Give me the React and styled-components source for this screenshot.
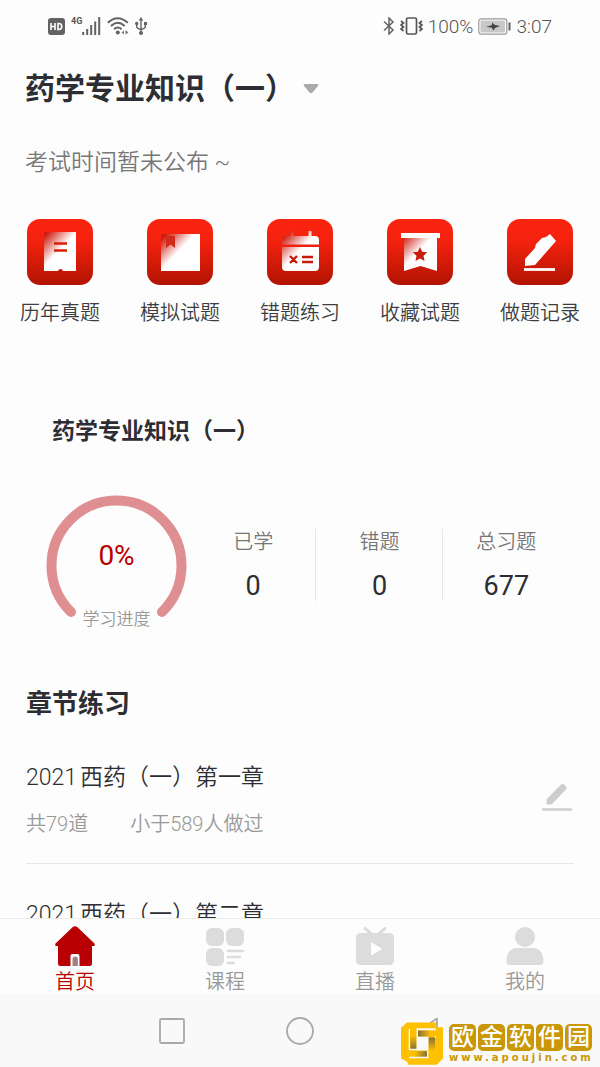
import React from 'react';
import styled, { createGlobalStyle } from 'styled-components';

const GlobalStyle = createGlobalStyle`
  * {
    box-sizing: border-box;
  }
  body {
    margin: 0;
    background: #fdfdfd;
    color: #2d2e33;
    font-family: Roboto, 'Noto Sans CJK SC', sans-serif;
  }
  h1, h2, h3, p, ul, dl, dd {
    margin: 0;
    padding: 0;
  }
  button, select {
    margin: 0;
    padding: 0;
    border: 0;
    background: none;
    color: inherit;
    font: inherit;
  }
`;
const Page = styled.div`
  display: flex;
  flex-direction: column;
  height: 100vh;
`;
const StatusBar = styled.header`
  display: flex;
  flex: none;
  align-items: center;
  justify-content: space-between;
  height: 52px;
  padding: 0 48px;
  color: #555;
  font-size: 19px;
  font-weight: 350;
`;
const StatusGroup = styled.div`
  display: flex;
  align-items: center;
  gap: ${(props) => props.$gap}px;
`;
const Signal = styled.div`
  display: flex;
  align-items: flex-start;
  font-size: 9px;
  font-weight: 700;
  line-height: 9px;
`;
const Content = styled.main`
  flex: 1;
  min-height: 0;
  overflow: hidden;
`;
const Heading = styled.div`
  padding: 17px 25px 0;
`;
const SubjectPicker = styled.label`
  display: inline-flex;
  align-items: center;
  gap: 8px;
`;
const SubjectSelect = styled.select`
  appearance: none;
  field-sizing: content;
  height: 40px;
  font-size: 30px;
  font-weight: 700;
  line-height: 40px;
`;
const Notice = styled.p`
  margin-top: 38px;
  color: #777;
  font-size: 23px;
  font-weight: 350;
  line-height: 32px;
`;
const Shortcuts = styled.nav`
  display: grid;
  grid-template-columns: repeat(5, 1fr);
  margin-top: 40px;
`;
const Shortcut = styled.button`
  display: flex;
  flex-direction: column;
  align-items: center;
  gap: 14px;
  color: #3c3d42;
  font-size: 20px;
  font-weight: 350;
  line-height: 28px;
`;
const Card = styled.section`
  padding: 89px 31px 0 46px;
`;
const CardTitle = styled.h2`
  padding-left: 6px;
  font-size: 23px;
  font-weight: 700;
  line-height: 32px;
`;
const CardBody = styled.div`
  display: flex;
  margin-top: 47px;
`;
const Gauge = styled.div`
  position: relative;
  flex: none;
  width: 141px;
  height: 136px;
`;
const GaugeText = styled.div`
  position: absolute;
  inset: 44px 0 0;
  display: flex;
  flex-direction: column;
  align-items: center;
  justify-content: space-between;
  color: #999;
  font-size: 17px;
  font-weight: 350;
  line-height: 24px;
`;
const Percent = styled.strong`
  color: #b80000;
  font-size: 28px;
  font-weight: 400;
  line-height: 34px;
`;
const Stats = styled.dl`
  display: grid;
  flex: 1;
  grid-template-columns: repeat(3, 1fr);
  align-self: flex-start;
  margin: 34px 0 0 3px;
`;
const Stat = styled.div`
  height: 72px;
  padding-left: 1px;
  border-right: 1px solid #e6e6e6;
  text-align: center;
  &:last-child {
    border-right: 0;
  }
`;
const StatLabel = styled.dt`
  color: #777;
  font-size: 20px;
  font-weight: 350;
  line-height: 26px;
`;
const StatValue = styled.dd`
  margin-top: 14px;
  font-size: 27px;
  line-height: 34px;
`;
const Chapters = styled.section`
  padding: 55px 26px 0;
`;
const ChaptersTitle = styled.h2`
  font-size: 26px;
  font-weight: 700;
  line-height: 36px;
`;
const ChapterList = styled.ul`
  margin-top: 5px;
  list-style: none;
`;
const Chapter = styled.li`
  display: flex;
  align-items: center;
  justify-content: space-between;
  padding: 36px 2px 25px 0;
  border-bottom: 1px solid #e6e6e6;
`;
const ChapterTitle = styled.h3`
  font-size: 23px;
  font-weight: 350;
  line-height: 30px;
  text-autospace: normal;
`;
const Meta = styled.p`
  display: flex;
  gap: 42px;
  margin-top: 17px;
  color: #999;
  font-size: 20px;
  font-weight: 350;
  line-height: 28px;
`;
const EditButton = styled.button`
  display: flex;
  padding-bottom: 8px;
`;
const TabBar = styled.nav`
  display: grid;
  flex: none;
  grid-template-columns: repeat(4, 1fr);
  height: 76px;
  border-top: 1px solid #ececec;
`;
const Tab = styled.a`
  display: flex;
  flex-direction: column;
  align-items: center;
  gap: 4px;
  padding-top: 7px;
  color: ${(props) => (props.$active ? '#b80000' : '#999')};
  font-size: 20px;
  font-weight: 350;
  line-height: 24px;
  text-decoration: none;
`;
const SystemNav = styled.footer`
  position: relative;
  display: flex;
  flex: none;
  justify-content: center;
  height: 73px;
  background: #f9f9f9;
`;
const SystemButton = styled.button`
  display: flex;
  align-items: center;
  justify-content: center;
  width: 128px;
`;
const Watermark = styled.div`
  position: absolute;
  right: 8px;
  bottom: 2px;
  display: flex;
  align-items: flex-end;
  gap: 6px;
`;
const Brand = styled.div`
  display: flex;
  flex-direction: column;
  width: 143px;
  color: #c99708;
`;
const Tiles = styled.div`
  display: flex;
  gap: 2px;
`;
const Tile = styled.span`
  width: 27px;
  height: 27px;
  border-radius: 5px;
  background: #c99708;
  color: #fff;
  font-size: 23px;
  font-weight: 500;
  line-height: 27px;
  text-align: center;
`;
const Site = styled.span`
  font-family: 'DejaVu Sans', sans-serif;
  font-size: 10px;
  font-weight: 700;
  letter-spacing: 3px;
  line-height: 14px;
  white-space: nowrap;
`;

const HdIcon = () => (
  <svg width="17" height="17" viewBox="0 0 17 17">
    <rect width="17" height="17" rx="3" fill="#626262" />
    <path d="M3 5v7M7 5v7M3 8.500h4M10 5.500v6h1q2.700 0 2.700-3t-2.700-3z" fill="none" stroke="#fff" strokeWidth="1.600" />
  </svg>
);
const BarsIcon = () => (
  <svg width="19" height="18" viewBox="0 0 19 18">
    <path d="M1.200 18v-3M5.200 18v-6M9.200 18V8M13.200 18V4.500M17.200 18V0" stroke="#626262" strokeWidth="2" />
  </svg>
);
const WifiIcon = () => (
  <svg width="22" height="18" viewBox="0 0 22 18">
    <g fill="none" stroke="#626262" strokeWidth="1.900">
      <path d="M.8 5.800q9.700-9.200 20 0" />
      <path d="M3.900 9q6.800-6.400 13.800 0" />
      <path d="M7 12.200q3.800-3.500 7.600 0" />
    </g>
    <circle cx="10.800" cy="15.500" r="2" fill="#626262" />
    <path d="M17 13.500v4l-2.500-2zM18.500 13l3 2.500-3 2z" fill="#777" />
  </svg>
);
const UsbIcon = () => (
  <svg width="12" height="18" viewBox="0 0 12 18">
    <path d="M6 2v14M1.700 7v2.500q0 2 4.300 3M10.300 7v2.500q0 2-4.300 3" fill="none" stroke="#626262" strokeWidth="1.400" />
    <path d="M6 0l2.300 3.500H3.700zM9 5h3v3H9z" fill="#626262" />
    <circle cx="1.700" cy="6.500" r="1.700" fill="#626262" />
    <circle cx="6" cy="16" r="2" fill="#626262" />
  </svg>
);
const BluetoothIcon = () => (
  <svg width="12" height="18" viewBox="0 0 12 18">
    <path d="M1 4.500l9 8.500-4 4V1l4 4-9 8.500" fill="none" stroke="#626262" strokeWidth="1.500" />
  </svg>
);
const VibrateIcon = () => (
  <svg width="23" height="18" viewBox="0 0 23 18">
    <rect x="6.500" y="1" width="10" height="16" rx="1.500" fill="none" stroke="#555" strokeWidth="1.700" />
    <path d="M1 4l2.500 2L1 8l2.500 2L1 12l2.500 2M22 4l-2.500 2L22 8l-2.500 2 2.500 2-2.500 2" fill="none" stroke="#555" strokeWidth="1.700" />
  </svg>
);
const BatteryIcon = () => (
  <svg width="33" height="17" viewBox="0 0 33 17">
    <rect x=".8" y=".8" width="28" height="15.400" rx="2.500" fill="#fff" stroke="#999" strokeWidth="1.200" />
    <rect x="2.500" y="2.500" width="24.600" height="12" rx="1" fill="#c8c8c8" />
    <rect x="30.500" y="4.500" width="2" height="8" fill="#626262" />
    <path d="M8 9l6-2V4.500l3 2.500 5 1-5 2-1.500 2.500-2-3z" fill="#444" />
  </svg>
);

const ShortcutGlyph = ({ name }) => {
  const fade = 'url(#fade)';
  switch (name) {
    case 'paper':
      return (
        <>
          <path d="M17 13h32v39H36a2.600 2.600 0 0 0-5 0H17z" fill={fade} />
          <path d="M27 24.500h13M27 31.500h13" stroke="#d81d08" strokeWidth="2.500" />
        </>
      );
    case 'book':
      return (
        <>
          <path d="M14 15h39v37H14z" fill={fade} />
          <path d="M19 17h9v12l-4.500-3.500L19 29z" fill="#d42a1c" />
        </>
      );
    case 'calendar':
      return (
        <>
          <path d="M25 12v7M43 12v7" stroke={fade} strokeWidth="3" />
          <path d="M15 25.500V21q0-4 4-4h29q4 0 4 4v4.500zM15 28h37v20q0 4-4 4H19q-4 0-4-4z" fill={fade} />
          <path d="M23 37l7 7M30 37l-7 7M35 38h11M35 43h11" stroke="#c71a08" strokeWidth="2.400" />
        </>
      );
    case 'banner':
      return (
        <>
          <path d="M17 18h33v34l-16.500-5L17 52z" fill={fade} />
          <path d="M14 14h39v5H14z" fill="#fff" />
          <path d="M33 28l2.200 4.700 5.100.600-3.800 3.500 1 5.100-4.500-2.500-4.500 2.500 1-5.100-3.800-3.500 5.100-.600z" fill="#c91c0b" />
        </>
      );
    default:
      return (
        <>
          <path d="M18 40L28 29L29 25L35 19L39 18L43 15L49 22L28 46L18 47z" fill="#fff" />
          <path d="M17 50.500h31" stroke="#fff" strokeWidth="2.800" />
        </>
      );
  }
};
const ShortcutIcon = ({ name }) => (
  <svg width="66" height="66" viewBox="0 0 66 66">
    <defs>
      <linearGradient id="tile" x1="0" y1="0" x2="0" y2="1">
        <stop offset="0" stopColor="#fb2410" />
        <stop offset="0.350" stopColor="#f3220e" />
        <stop offset="1" stopColor="#b01402" />
      </linearGradient>
      <linearGradient id="fade" gradientUnits="userSpaceOnUse" x1="16" y1="15" x2="33" y2="31">
        <stop offset="0.100" stopColor="#cf1c10" />
        <stop offset="1" stopColor="#fff" />
      </linearGradient>
    </defs>
    <rect width="66" height="66" rx="13" fill="url(#tile)" />
    <ShortcutGlyph name={name} />
  </svg>
);

const TabIcon = ({ name }) => (
  <svg width="40" height="40" viewBox="0 0 40 40" fill="#dcdcdc">
    {name === 'home' && (
      <>
        <path d="M17.500 1.300q2.500-2 5 0L39.500 17.500q1 2.500-1 2.500H37v17.500q0 2.500-2.500 2.500h-29Q3 40 3 37.500V20H1.500q-2 0-1-2.500z" fill="#b80004" />
        <path d="M15.500 40V30q0-2 2-2h5q2 0 2 2v10z" fill="#fff" />
        <path d="M17.500 40v-6.500q0-3 2.700-3t2.700 3V40z" fill="#a58080" />
      </>
    )}
    {name === 'course' && (
      <>
        <rect x="1" y="2" width="18" height="18" rx="6" />
        <rect x="21" y="2" width="18" height="18" rx="6" />
        <rect x="1" y="22" width="18" height="18" rx="6" />
        <path d="M23 25h15M23 31h12M23 37h6" stroke="#dcdcdc" strokeWidth="2.500" strokeLinecap="round" />
      </>
    )}
    {name === 'live' && (
      <>
        <path d="M10 2.500l7 6M30 2.500l-7 6" stroke="#dcdcdc" strokeWidth="3" strokeLinecap="round" />
        <rect x="1" y="7" width="38" height="32" rx="4.500" />
        <path d="M16 17.500v10.500q0 1.500 1.500.700l8.500-5q1.200-.900 0-1.800l-8.500-5q-1.500-.800-1.500.600z" fill="#fff" />
      </>
    )}
    {name === 'me' && (
      <>
        <circle cx="20" cy="11" r="10" />
        <path d="M13 22h14q11 0 11.500 13 0 4-3 4h-31q-3 0-3-4Q2 22 13 22z" />
      </>
    )}
  </svg>
);

const EditIcon = () => (
  <svg width="30" height="28" viewBox="0 0 30 28">
    <path d="M4.500 16.500L19 1.500q1.500-1 3 0l2 2q1.500 1.500 0 3L9.500 21.500h-5z" fill="#cdcdcd" />
    <path d="M1 26.500h28" stroke="#cdcdcd" strokeWidth="2.500" strokeLinecap="round" />
  </svg>
);

const LogoGradient = ({ id, ...direction }) => (
  <linearGradient id={id} {...direction}>
    <stop offset="0.300" stopColor="#ffc000" />
    <stop offset="1" stopColor="#83703a" />
  </linearGradient>
);
const LogoIcon = () => (
  <svg width="42" height="43" viewBox="0 0 126 128">
    <defs>
      <LogoGradient id="down" x1="0" y1="0" x2="0" y2="1" />
      <LogoGradient id="up" x1="0" y1="1" x2="0" y2="0" />
      <LogoGradient id="right" x1="0" y1="0" x2="1" y2="0" />
      <LogoGradient id="left" x1="1" y1="0" x2="0" y2="0" />
    </defs>
    <path d="M18 1h88v14h20v94l-19 19H20v-8L0 108V17z" fill="#ffc000" />
    <path d="M46 18h58v7H51v18h32v42H46z" fill="#f9f9f9" />
    <path d="M28 22h18v59H28z" fill="url(#down)" />
    <path d="M51 25h54v18H51z" fill="url(#left)" />
    <path d="M83 46h19v58H83z" fill="url(#up)" />
    <path d="M24 87h54v17H24z" fill="url(#right)" />
    <path d="M25 20v62h24M103 43v4M80 86v20M24 106h58" fill="none" stroke="#f9f9f9" strokeWidth="4" />
  </svg>
);

const shortcuts = [
  { icon: 'paper', label: '历年真题' },
  { icon: 'book', label: '模拟试题' },
  { icon: 'calendar', label: '错题练习' },
  { icon: 'banner', label: '收藏试题' },
  { icon: 'pen', label: '做题记录' },
];
const stats = [
  { label: '已学', value: 0 },
  { label: '错题', value: 0 },
  { label: '总习题', value: 677 },
];
const chapters = [
  { title: '2021西药（一）第一章', count: '共79道', done: '小于589人做过' },
  { title: '2021西药（一）第二章', count: '', done: '' },
];
const tabs = [
  { icon: 'home', label: '首页' },
  { icon: 'course', label: '课程' },
  { icon: 'live', label: '直播' },
  { icon: 'me', label: '我的' },
];

function App() {
  return (
    <Page>
      <GlobalStyle />
      <StatusBar>
        <StatusGroup $gap={6}>
          <HdIcon />
          <Signal>
            4G
            <BarsIcon />
          </Signal>
          <WifiIcon />
          <UsbIcon />
        </StatusGroup>
        <StatusGroup $gap={5}>
          <BluetoothIcon />
          <VibrateIcon />
          <span>100%</span>
          <BatteryIcon />
          <span>3:07</span>
        </StatusGroup>
      </StatusBar>
      <Content>
        <Heading>
          <SubjectPicker>
            <SubjectSelect aria-label="科目">
              <option>药学专业知识（一）</option>
            </SubjectSelect>
            <svg width="16" height="10" viewBox="0 0 16 10">
              <path d="M2 0h12q2 0 1 2L9.500 8.500q-1.500 1.500-3 0L1 2Q0 0 2 0z" fill="#aaa" />
            </svg>
          </SubjectPicker>
          <Notice>考试时间暂未公布 ~</Notice>
        </Heading>
        <Shortcuts>
          {shortcuts.map((item) => (
            <Shortcut key={item.icon} type="button">
              <ShortcutIcon name={item.icon} />
              {item.label}
            </Shortcut>
          ))}
        </Shortcuts>
        <Card>
          <CardTitle>药学专业知识（一）</CardTitle>
          <CardBody>
            <Gauge>
              <svg width="141" height="130" viewBox="0 0 141 130">
                <path d="M25 117A65 65 0 1 1 116 117" fill="none" stroke="#df8f92" strokeWidth="10" strokeLinecap="round" />
              </svg>
              <GaugeText>
                <Percent>0%</Percent>
                学习进度
              </GaugeText>
            </Gauge>
            <Stats>
              {stats.map((item) => (
                <Stat key={item.label}>
                  <StatLabel>{item.label}</StatLabel>
                  <StatValue>{item.value}</StatValue>
                </Stat>
              ))}
            </Stats>
          </CardBody>
        </Card>
        <Chapters>
          <ChaptersTitle>章节练习</ChaptersTitle>
          <ChapterList>
            {chapters.map((item) => (
              <Chapter key={item.title}>
                <div>
                  <ChapterTitle>{item.title}</ChapterTitle>
                  {item.count && (
                    <Meta>
                      <span>{item.count}</span>
                      <span>{item.done}</span>
                    </Meta>
                  )}
                </div>
                {item.count && (
                  <EditButton type="button" aria-label="做题">
                    <EditIcon />
                  </EditButton>
                )}
              </Chapter>
            ))}
          </ChapterList>
        </Chapters>
      </Content>
      <TabBar>
        {tabs.map((item) => (
          <Tab key={item.icon} href={`#${item.icon}`} $active={item.icon === 'home'}>
            <TabIcon name={item.icon} />
            {item.label}
          </Tab>
        ))}
      </TabBar>
      <SystemNav>
        <SystemButton type="button" aria-label="多任务">
          <svg width="26" height="26" viewBox="0 0 26 26">
            <rect x="1" y="1" width="24" height="24" rx="1.500" fill="none" stroke="#a9a9a9" strokeWidth="1.800" />
          </svg>
        </SystemButton>
        <SystemButton type="button" aria-label="主屏幕">
          <svg width="28" height="28" viewBox="0 0 28 28">
            <circle cx="14" cy="14" r="13" fill="none" stroke="#a9a9a9" strokeWidth="1.800" />
          </svg>
        </SystemButton>
        <SystemButton type="button" aria-label="返回">
          <svg width="22" height="28" viewBox="0 0 22 28">
            <path d="M20 1.500v25L1.500 14z" fill="none" stroke="#a9a9a9" strokeWidth="1.800" strokeLinejoin="round" />
          </svg>
        </SystemButton>
        <Watermark>
          <LogoIcon />
          <Brand>
            <Tiles>
              {[...'欧金软件园'].map((char) => (
                <Tile key={char}>{char}</Tile>
              ))}
            </Tiles>
            <Site>www.apoujin.com</Site>
          </Brand>
        </Watermark>
      </SystemNav>
    </Page>
  );
}

export default App;
